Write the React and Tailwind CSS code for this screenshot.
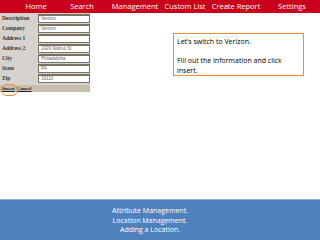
const fields = [
  { label: "Description", value: "Verizon" },
  { label: "Company", value: "Verizon" },
  { label: "Address 1", value: "" },
  { label: "Address 2", value: "1429 Walnut St" },
  { label: "City", value: "Philadelphia" },
  { label: "State", value: "PA" },
  { label: "Zip", value: "19110" },
];

export default function App() {
  return (
    <div className="relative w-[320px] h-[240px] bg-white overflow-hidden flex flex-col" style={{ fontFamily: "'Open Sans', sans-serif" }}>
      {/* top nav */}
      <div className="h-[13px] bg-[#c8001b] flex items-center text-white text-[7.5px] leading-none shrink-0 whitespace-nowrap">
        <span className="ml-[14px] w-[44px] flex justify-center">Home</span>
        <span className="ml-[2px] w-[44px] flex justify-center">Search</span>
        <span className="ml-[9px] w-[44px] flex justify-center">Management</span>
        <span className="ml-[6px] w-[44px] flex justify-center">Custom List</span>
        <span className="ml-[7px] w-[44px] flex justify-center">Create Report</span>
        <span className="ml-[12px] w-[44px] flex justify-center">Settings</span>
      </div>

      <div className="flex">
        {/* form */}
        <div className="w-[90px] bg-[#d6d3ce] flex flex-col" style={{ fontFamily: "'Liberation Serif', serif" }}>
          <div className="flex flex-col gap-[1px] pt-[1px]">
            {fields.map((f) => (
              <div key={f.label} className="flex items-center h-[9px]">
                <span className="w-[38px] pl-[2px] text-[5.5px] font-bold text-[#333] leading-none">{f.label}</span>
                <div className="w-[52px] h-[9px] bg-white border border-[#7a7260] border-t-[2px] flex items-center pl-[2px] text-[4.5px] text-[#666] leading-none" style={{ fontFamily: "'Liberation Sans', sans-serif" }}>
                  {f.value}
                </div>
              </div>
            ))}
          </div>
          <div className="relative mt-[2px] h-[7px] bg-[#c7bfae] flex items-center pl-[2px] text-[5px] font-bold text-[#222] leading-none gap-[2px]">
            <span className="underline">Insert</span>
            <span className="underline">Cancel</span>
            <div className="absolute left-[1px] top-[-1px] w-[17px] h-[12px] rounded-full border border-[#f08a30]" />
          </div>
        </div>

        {/* callout */}
        <div className="ml-[83px] mt-[20px] w-[131px] h-[43px] border border-[#f58a35] px-[3px] pt-[3px] text-[7px] leading-[9.5px] text-black">
          <div>Let’s switch to Verizon.</div>
          <div className="h-[9.5px]" />
          <div>Fill out the information and click</div>
          <div>insert.</div>
        </div>
      </div>

      <div className="flex-1" />

      {/* bottom banner */}
      <div className="h-[41px] bg-[#4f81bd] border-t border-[#8fb0d8] flex flex-col items-center justify-center text-white text-[7px] leading-[9.5px] pr-[20px] pt-[1px]">
        <div>Attribute Management.</div>
        <div>Location Management.</div>
        <div>Adding a Location.</div>
      </div>
    </div>
  );
}
